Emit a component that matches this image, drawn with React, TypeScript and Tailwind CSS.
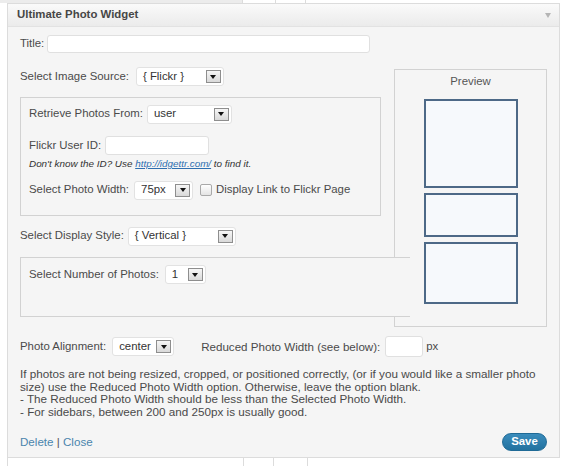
import React from "react";

function Arrow() {
  return (
    <span className="flex h-[13px] w-[15px] items-center justify-center border border-[#8e8e8e] bg-gradient-to-b from-[#f6f6f6] to-[#d9d9d9]">
      <span className="h-0 w-0 border-l-[3px] border-r-[3px] border-t-[4px] border-l-transparent border-r-transparent border-t-[#111]" />
    </span>
  );
}

function Select({ text, w }: { text: string; w: string }) {
  return (
    <div className={`flex h-[19px] ${w} items-center justify-between rounded-[3px] border border-[#e2e2e2] bg-white pl-[6px] pr-[2px] text-[#333]`}>
      <span>{text}</span>
      <Arrow />
    </div>
  );
}

export default function App() {
  return (
    <div className="relative h-[466px] w-[570px] overflow-hidden bg-white font-['Liberation_Sans',Arial,sans-serif] text-[11.4px] text-[#4a4a4a]">
      {/* background strip top */}
      <div className="flex h-[3px]">
        <div className="w-[242px] bg-[#ececec]" />
        <div className="w-[33px] border-l border-[#dcdcdc]" />
        <div className="w-[30px] border-l border-[#dcdcdc]" />
        <div className="flex-1 border-l border-[#dcdcdc]" />
      </div>

      <div className="ml-[7px] w-[553px] border border-[#dcdcdc] bg-[#f5f5f5]">
        {/* header */}
        <div className="flex h-[23px] items-center justify-between border-b border-[#e2e2e2] bg-gradient-to-b from-[#fafafa] to-[#ebebeb] pl-[9px] pr-[8px]">
          <span className="font-bold text-[#464646]">Ultimate Photo Widget</span>
          <span className="h-0 w-0 border-l-[3px] border-r-[3px] border-t-[5px] border-l-transparent border-r-transparent border-t-[#b5b5b5]" />
        </div>

        <div className="px-[12px] pb-[6px]">
          {/* title */}
          <div className="mt-[8px] flex h-[18px] items-center gap-[3px]">
            <span>Title:</span>
            <div className="h-[18px] w-[323px] rounded-[3px] border border-[#e0e0e0] bg-white" />
          </div>

          {/* main row */}
          <div className="mt-[14px] flex">
            <div className="flex w-[374px] flex-col">
              <div className="flex h-[19px] items-center gap-[7px]">
                <span>Select Image Source:</span>
                <Select text="{ Flickr }" w="w-[88px]" />
              </div>

              <div className="mt-[11px] h-[119px] w-[361px] border border-[#d2d2d2] px-[8px] pt-[6px]">
                <div className="flex h-[20px] items-center gap-[4px]">
                  <span>Retrieve Photos From:</span>
                  <Select text="user" w="w-[85px]" />
                </div>
                <div className="mt-[12px] flex h-[19px] items-center gap-[4px]">
                  <span>Flickr User ID:</span>
                  <div className="h-[19px] w-[104px] rounded-[3px] border border-[#e0e0e0] bg-white" />
                </div>
                <div className="mt-[3px] h-[12px] text-[9.9px] italic leading-[12px] text-[#333]">
                  Don't know the ID? Use <span className="text-[#2f6fb0] underline">http://idgettr.com/</span> to find it.
                </div>
                <div className="mt-[11px] flex h-[18px] items-center gap-[5px]">
                  <span>Select Photo Width:</span>
                  <Select text="75px" w="w-[59px]" />
                  <span className="ml-[2px] h-[12px] w-[12px] rounded-[2px] border border-[#a9a9a9] bg-gradient-to-b from-white to-[#e4e4e4]" />
                  <span className="ml-[-1px]">Display Link to Flickr Page</span>
                </div>
              </div>

              <div className="mt-[11px] flex h-[18px] items-center gap-[4px]">
                <span>Select Display Style:</span>
                <Select text="{ Vertical }" w="w-[108px]" />
              </div>

              <div className="relative z-10 mt-[12px] h-[60px] w-[390px] border-y border-l border-[#d2d2d2] bg-[#f5f5f5] px-[8px] pt-[7px]">
                <div className="flex h-[19px] items-center gap-[6px]">
                  <span>Select Number of Photos:</span>
                  <Select text="1" w="w-[41px]" />
                </div>
              </div>
            </div>

            <div className="mt-[2px] flex h-[258px] w-[154px] flex-col items-center border border-[#d2d2d2] pt-[4px]">
              <span className="leading-[14px] text-[#555]">Preview</span>
              <div className="mt-[11px] h-[89px] w-[94px] border-2 border-[#4d6987] bg-[#f6f9fc]" />
              <div className="mt-[5px] h-[44px] w-[94px] border-2 border-[#4d6987] bg-[#f6f9fc]" />
              <div className="mt-[5px] h-[62px] w-[94px] border-2 border-[#4d6987] bg-[#f6f9fc]" />
            </div>
          </div>

          {/* alignment row */}
          <div className="mt-[9px] flex h-[21px] items-center">
            <span>Photo Alignment:</span>
            <div className="ml-[6px]">
              <Select text="center" w="w-[62px]" />
            </div>
            <span className="ml-[27px] text-[11.6px]">Reduced Photo Width (see below):</span>
            <div className="ml-[5px] h-[21px] w-[38px] rounded-[3px] border border-[#e0e0e0] bg-white" />
            <span className="ml-[3px]">px</span>
          </div>

          {/* help text */}
          <div className="mt-[11px] whitespace-nowrap text-[11.7px] leading-[12.5px]">
            If photos are not being resized, cropped, or positioned correctly, (or if you would like a smaller photo
            <br />
            size) use the Reduced Photo Width option. Otherwise, leave the option blank.
            <br />- The Reduced Photo Width should be less than the Selected Photo Width.
            <br />- For sidebars, between 200 and 250px is usually good.
          </div>

          {/* footer */}
          <div className="mt-[15px] flex h-[18px] items-center justify-between">
            <div className="text-[11.6px]">
              <span className="text-[#4a85ad]">Delete</span>
              <span className="text-[#555]"> | </span>
              <span className="text-[#4a85ad]">Close</span>
            </div>
            <div className="flex h-[18px] w-[45px] items-center justify-center rounded-full border border-[#1f6a96] bg-gradient-to-b from-[#3a8cbc] to-[#22729f] text-[11.4px] font-bold text-white">
              Save
            </div>
          </div>
        </div>
      </div>

      {/* background strip bottom */}
      <div className="flex h-[10px]">
        <div className="w-[7px]" />
        <div className="w-[236px] border-l border-[#dcdcdc]" />
        <div className="w-[30px] border-l border-[#dcdcdc]" />
        <div className="w-[34px] border-l border-[#dcdcdc]" />
        <div className="flex-1 border-l border-[#dcdcdc]" />
      </div>
    </div>
  );
}
